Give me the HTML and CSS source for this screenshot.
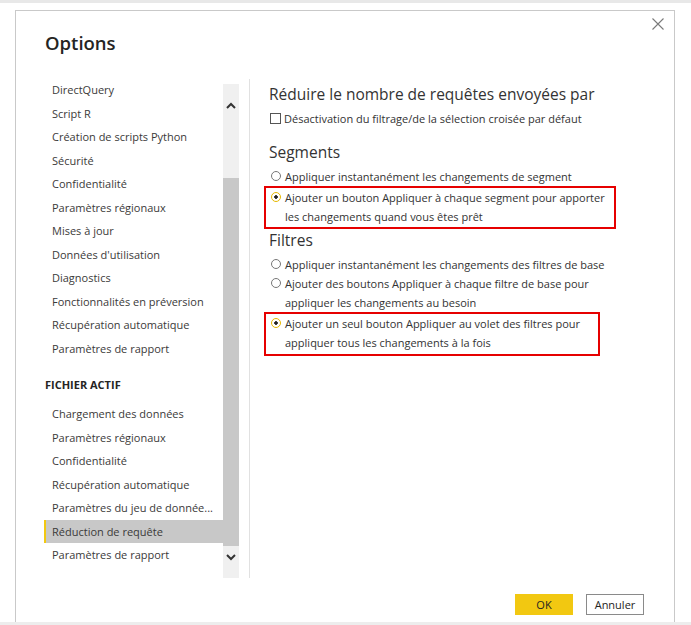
FILE: index.html
```html
<!DOCTYPE html>
<html lang="fr">
<head>
  <meta charset="UTF-8" />
  <meta name="viewport" content="width=device-width, initial-scale=1.0"/>
  <title>Options</title>
  <link rel="stylesheet" href="styles.css">
</head>
<body>

<div class="top-strip"></div>

<div class="dialog">
  <button class="close-btn" aria-label="Fermer">
    <svg width="12" height="12" viewBox="0 0 12 12"><path d="M0.5 0.5 L11.5 11.5 M11.5 0.5 L0.5 11.5" stroke="#7a7a7a" stroke-width="1.1" fill="none"/></svg>
  </button>

  <h1 class="dialog-title">Options</h1>

  <div class="dialog-body">
    <div class="sidebar">
      <div class="nav-scroll">
        <ul class="nav">
          <li>DirectQuery</li>
          <li>Script R</li>
          <li>Création de scripts Python</li>
          <li>Sécurité</li>
          <li>Confidentialité</li>
          <li>Paramètres régionaux</li>
          <li>Mises à jour</li>
          <li>Données d'utilisation</li>
          <li>Diagnostics</li>
          <li>Fonctionnalités en préversion</li>
          <li>Récupération automatique</li>
          <li>Paramètres de rapport</li>
        </ul>
        <div class="nav-section">FICHIER ACTIF</div>
        <ul class="nav">
          <li>Chargement des données</li>
          <li>Paramètres régionaux</li>
          <li>Confidentialité</li>
          <li>Récupération automatique</li>
          <li>Paramètres du jeu de donnée...</li>
          <li class="active">Réduction de requête</li>
          <li>Paramètres de rapport</li>
        </ul>
      </div>
      <div class="scrollbar">
        <div class="sb-arrow sb-up">
          <svg width="10" height="7" viewBox="0 0 10 7"><path d="M1 6 L5 2 L9 6" stroke="#333" stroke-width="2" fill="none"/></svg>
        </div>
        <div class="sb-gap"></div>
        <div class="sb-thumb"></div>
        <div class="sb-arrow sb-down">
          <svg width="10" height="7" viewBox="0 0 10 7"><path d="M1 1 L5 5 L9 1" stroke="#333" stroke-width="2" fill="none"/></svg>
        </div>
      </div>
    </div>

    <div class="divider"></div>

    <div class="panel">
      <h2 class="panel-title">Réduire le nombre de requêtes envoyées par</h2>
      <label class="check-row">
        <span class="checkbox"></span>
        <span>Désactivation du filtrage/de la sélection croisée par défaut</span>
      </label>

      <h2 class="group-title">Segments</h2>
      <div class="option first">
        <span class="radio"></span>
        <span>Appliquer instantanément les changements de segment</span>
      </div>
      <div class="option highlight seg-box">
        <span class="radio checked"></span>
        <span>Ajouter un bouton Appliquer à chaque segment pour apporter<br>les changements quand vous êtes prêt</span>
      </div>

      <h2 class="group-title filters">Filtres</h2>
      <div class="option first">
        <span class="radio"></span>
        <span>Appliquer instantanément les changements des filtres de base</span>
      </div>
      <div class="option">
        <span class="radio"></span>
        <span>Ajouter des boutons Appliquer à chaque filtre de base pour<br>appliquer les changements au besoin</span>
      </div>
      <div class="option highlight filter-box">
        <span class="radio checked"></span>
        <span>Ajouter un seul bouton Appliquer au volet des filtres pour<br>appliquer tous les changements à la fois</span>
      </div>
    </div>
  </div>

  <div class="dialog-footer">
    <button class="btn btn-primary">OK</button>
    <button class="btn btn-secondary">Annuler</button>
  </div>
</div>

<div class="bottom-strip"></div>

</body>
</html>
```

FILE: styles.css
```css
* {
  margin: 0;
  padding: 0;
  box-sizing: border-box;
  font-family: "Segoe UI", "Open Sans", sans-serif;
}

body {
  background: #fff;
  color: #333;
  width: 691px;
  height: 625px;
  overflow: hidden;
}

.top-strip {
  height: 3px;
  background: #e8e8e8;
}

.bottom-strip {
  height: 3px;
  background: #ededed;
}

.dialog {
  position: relative;
  width: 660px;
  height: 612px;
  margin: 7px 0 0 15px;
  border: 1px solid #c9c9c9;
  border-bottom: none;
  background: #fff;
}

.close-btn {
  position: absolute;
  top: 7px;
  right: 10px;
  width: 12px;
  height: 12px;
  border: none;
  background: none;
  display: flex;
}

.dialog-title {
  padding: 18px 0 0 29px;
  font-size: 18.5px;
  line-height: 27px;
  font-weight: 600;
  color: #252423;
}

.dialog-body {
  display: flex;
  align-items: flex-start;
  margin-top: 22px;
  height: 500px;
}

/* left navigation */
.sidebar {
  display: flex;
  margin-left: 28px;
  height: 500px;
}

.nav-scroll {
  width: 179px;
  height: 500px;
  overflow: hidden;
}

.nav {
  list-style: none;
}

.nav li {
  height: 23.5px;
  line-height: 23.5px;
  padding-left: 6px;
  font-size: 11px;
  color: #3b3a39;
  white-space: nowrap;
  border-left: 2px solid transparent;
}

.nav li.active {
  background: #c8c8c8;
  border-left-color: #f2c811;
}

.nav-section {
  height: 42px;
  padding: 17px 0 0 1px;
  line-height: 16px;
  font-size: 11px;
  font-weight: 700;
  color: #252423;
}

.scrollbar {
  display: flex;
  flex-direction: column;
  width: 16px;
  height: 494px;
  margin-top: 6px;
  background: #f0f0f0;
}

.sb-arrow {
  display: flex;
  align-items: center;
  justify-content: center;
}

.sb-up {
  height: 42px;
}

.sb-gap {
  height: 52px;
}

.sb-thumb {
  height: 368px;
  background: #c8c8c8;
}

.sb-down {
  height: 22px;
}

.divider {
  width: 1px;
  height: 499px;
  margin: 1px 0 0 10px;
  background: #e1e1e1;
}

/* right panel */
.panel {
  padding: 5px 0 0 19px;
}

.panel-title,
.group-title {
  font-size: 15.5px;
  line-height: 22px;
  font-weight: 400;
  color: #333;
}

.check-row {
  display: flex;
  align-items: center;
  gap: 3px;
  margin-top: 4px;
  height: 19px;
  font-size: 11px;
  padding-left: 1px;
  white-space: nowrap;
}

.checkbox {
  width: 11px;
  height: 11px;
  border: 1px solid #555;
  background: #fff;
}

.group-title {
  margin-top: 13px;
}

.group-title.filters {
  margin-top: 0;
}

.option {
  display: flex;
  align-items: flex-start;
  gap: 4px;
  font-size: 11px;
  line-height: 19px;
  padding-left: 2px;
  white-space: nowrap;
}

.option.first {
  margin-top: 4px;
}

.radio {
  flex: none;
  width: 10px;
  height: 10px;
  margin-top: 4px;
  border: 1px solid #777;
  border-radius: 50%;
  background: #fff;
}

.radio.checked {
  border-color: #e6b800;
  background: radial-gradient(circle, #222 0 1.5px, #fff 2px);
}

.highlight {
  margin-left: -5px;
  padding: 0 0 1px 5px;
  border: 2px solid #e60000;
}

.seg-box {
  width: 352px;
}

.filter-box {
  width: 336px;
  padding-bottom: 2px;
}

/* footer */
.dialog-footer {
  display: flex;
  justify-content: flex-end;
  gap: 13px;
  padding-right: 30px;
  margin-top: 16px;
}

.btn {
  width: 58px;
  height: 21px;
  font-size: 11px;
  color: #252423;
  cursor: pointer;
}

.btn-primary {
  background: #f2c811;
  border: none;
}

.btn-secondary {
  background: #fff;
  border: 1px solid #8a8a8a;
}
```
